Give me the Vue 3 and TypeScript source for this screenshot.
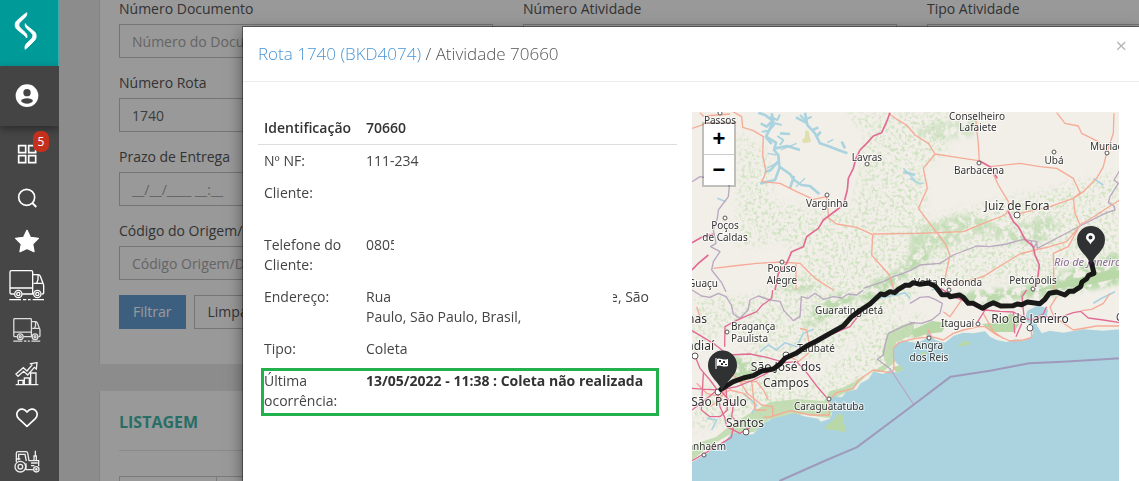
<script setup lang="ts">
import { ref } from 'vue'

interface MapLabel {
  text: string
  x: number
  y: number
  anchor?: 'start' | 'middle' | 'end'
  big?: boolean
}

interface Town {
  x: number
  y: number
  big?: boolean
}

const documento = ref('')
const rota = ref('1740')
const prazo = ref('')
const codigo = ref('')
const atividade = ref('')

const labels: MapLabel[] = [
  { text: 'Passos', x: 28, y: 12 },
  { text: 'Conselheiro', x: 285, y: 8 },
  { text: 'Lafaiete', x: 286, y: 19 },
  { text: 'Lavras', x: 175, y: 49 },
  { text: 'Varginha', x: 135, y: 95 },
  { text: 'Poços', x: 33, y: 117 },
  { text: 'de Caldas', x: 33, y: 129 },
  { text: 'Pouso', x: 90, y: 160 },
  { text: 'Alegre', x: 90, y: 172 },
  { text: 'Guaçu', x: 26, y: 175, anchor: 'end' },
  { text: 'Barbacena', x: 287, y: 62 },
  { text: 'Ubá', x: 362, y: 52 },
  { text: 'Muriaé', x: 398, y: 38, anchor: 'start' },
  { text: 'Juiz de Fora', x: 325, y: 98, big: true },
  { text: 'Petrópolis', x: 341, y: 172 },
  { text: 'Volta Redonda', x: 256, y: 174 },
  { text: 'nas', x: 15, y: 211, anchor: 'end', big: true },
  { text: 'Bragança', x: 39, y: 218, anchor: 'start' },
  { text: 'Paulista', x: 39, y: 230, anchor: 'start' },
  { text: 'ndiaí', x: 22, y: 238, anchor: 'end', big: true },
  { text: 'São Paulo', x: 27, y: 294, big: true },
  { text: 'Santos', x: 53, y: 315, big: true },
  { text: 'anhaém', x: 34, y: 338, anchor: 'end' },
  { text: 'Guaratinguetá', x: 157, y: 202 },
  { text: 'Taubaté', x: 124, y: 240 },
  { text: 'São José dos', x: 94, y: 259, big: true },
  { text: 'Campos', x: 94, y: 275, big: true },
  { text: 'Caraguatatuba', x: 137, y: 298 },
  { text: 'Itaguaí', x: 249, y: 215, anchor: 'start' },
  { text: 'Angra', x: 237, y: 237 },
  { text: 'dos Reis', x: 237, y: 249 },
  { text: 'Rio de Janeiro', x: 338, y: 211, big: true },
  { text: 'C', x: 424, y: 209, anchor: 'start' },
]

const towns: Town[] = [
  { x: 28, y: 1 }, { x: 175, y: 52 }, { x: 135, y: 83 }, { x: 33, y: 106 },
  { x: 90, y: 150 }, { x: 287, y: 51 }, { x: 362, y: 40 }, { x: 415, y: 41 },
  { x: 325, y: 103, big: true }, { x: 341, y: 177 }, { x: 257, y: 178 },
  { x: 35, y: 220 }, { x: 3, y: 244, big: true }, { x: 26, y: 280, big: true },
  { x: 54, y: 320, big: true }, { x: 12, y: 343 }, { x: 137, y: 287 },
  { x: 94, y: 243, big: true }, { x: 286, y: 212 }, { x: 338, y: 216, big: true },
  { x: 237, y: 226 },
]
</script>

<template>
  <div class="app">
    <aside class="sidebar">
      <a class="brand" href="#" aria-label="Início">
        <svg width="24" height="40" viewBox="44 33 72 120" fill="#fff" stroke="#fff" stroke-width="3" stroke-linejoin="round">
          <path d="M82 38C83 42 82 46 79 50L62 67C57 72 57 78 62 83L78 98C83 103 84 108 82 114C80 110 77 107 73 104L53 88C46 81 46 70 52 63L74 44C78 41 80 40 82 38Z" />
          <path d="M78 71C77 76 78 80 82 85L97 99C102 104 102 110 97 116L81 132C77 137 76 142 78 148C80 145 83 143 87 140L105 122C112 115 112 103 106 96L86 80C81 76 79 74 78 71Z" />
        </svg>
      </a>
      <button class="user" type="button" aria-label="Usuário">
        <svg width="24" height="24" viewBox="44 252 72 72">
          <circle cx="80" cy="287" r="34" fill="#fff" />
          <circle cx="80" cy="278" r="11" fill="#444" />
          <path d="M62 303C64 292 96 292 98 303C90 314 70 314 62 303Z" fill="#444" />
        </svg>
      </button>
      <nav class="menu">
        <a href="#" aria-label="Painel">
          <svg width="20" height="20" viewBox="49 70 60 60" fill="none" stroke="#fff" stroke-width="5">
            <path d="M54 75H75V96H54ZM84 75H105V96H84ZM54 105H75V126H54ZM84 105H105V126H84Z" />
          </svg>
          <span class="badge">5</span>
        </a>
        <a href="#" aria-label="Pesquisar">
          <svg width="20" height="20" viewBox="49 203 60 60" fill="none" stroke="#fff" stroke-width="5">
            <circle cx="78" cy="231" r="24" /><path d="M95 248L107 260" stroke-width="6" />
          </svg>
        </a>
        <a href="#" aria-label="Favoritos">
          <svg width="26" height="26" viewBox="42 326 78 78" fill="#fff" stroke="#fff" stroke-width="4" stroke-linejoin="round">
            <path d="M81 330L91 351L115 354L98 371L102 394L81 384L60 394L64 371L47 354L71 351Z" />
          </svg>
        </a>
        <a href="#" aria-label="Entregas">
          <svg width="36" height="32" viewBox="26 29 108 96" fill="none" stroke="#fff" stroke-width="4">
            <path d="M41 101H33Q29 101 29 97V35Q29 31 33 31H93Q97 31 97 35V101H66M30 83H96M98 43H114Q118 43 120 48L128 69Q130 72 130 77V98Q130 101 126 101H124M100 69H126M113 44V58L109 69M27 118H62M68 118H78M83 118H91M97 118H131" />
            <circle cx="54" cy="101" r="11" /><circle cx="54" cy="101" r="5" /><circle cx="111" cy="101" r="11" /><circle cx="111" cy="101" r="5" />
          </svg>
        </a>
        <a href="#" aria-label="Coletas">
          <svg width="28" height="25" viewBox="26 29 108 96" fill="none" stroke="#ddd" stroke-width="5">
            <path d="M41 101H33Q29 101 29 97V35Q29 31 33 31H93Q97 31 97 35V101H66M30 83H96M98 43H114Q118 43 120 48L128 69Q130 72 130 77V98Q130 101 126 101H124M100 69H126M113 44V58L109 69M27 118H62M68 118H78M83 118H91M97 118H131" />
            <circle cx="54" cy="101" r="11" /><circle cx="54" cy="101" r="4" /><circle cx="111" cy="101" r="11" /><circle cx="111" cy="101" r="4" />
          </svg>
        </a>
        <a href="#" aria-label="Indicadores">
          <svg width="24" height="24" viewBox="44 20 72 72" fill="none" stroke="#f4f4f4" stroke-width="4">
            <path d="M46 88H114M54 87V75H68V87M72 87V68H87V87M91 87V53H107V87" />
            <path d="M47 56L69 37L80 47L95 29L91 25L110 22L108 41L102 36L82 59L70 48L53 63Z" />
          </svg>
        </a>
        <a href="#" aria-label="Preferidos">
          <svg width="24" height="20" viewBox="44 158 72 60" fill="none" stroke="#fff" stroke-width="5" stroke-linejoin="round">
            <path d="M80 213L55 190C38 172 63 148 80 170C97 148 122 172 105 190Z" />
          </svg>
        </a>
        <a href="#" aria-label="Máquinas">
          <svg width="26" height="24" viewBox="41 284 78 72" fill="none" stroke="#ececec" stroke-width="4">
            <circle cx="60" cy="334" r="16" /><circle cx="60" cy="334" r="7" /><circle cx="108" cy="342" r="8" /><circle cx="108" cy="342" r="2" />
            <path d="M48 320V294Q48 289 53 289H77Q81 289 82 293L86 316H115V332M55 315V297H74L78 317M77 324V343H98M101 315V302H108V315M105 301V286M92 323H112M92 331H102M50 311H60" />
          </svg>
        </a>
      </nav>
    </aside>

    <main class="page">
      <section class="panel filters">
        <form class="grid" @submit.prevent>
          <div class="field">
            <label for="doc">Número Documento</label>
            <input id="doc" v-model="documento" type="text" placeholder="Número do Documento" />
          </div>
          <div class="field">
            <label for="ativ">Número Atividade</label>
            <input id="ativ" v-model="atividade" type="text" />
          </div>
          <div class="field">
            <label for="tipo">Tipo Atividade</label>
            <select id="tipo"><option value=""></option></select>
          </div>
          <div class="field first">
            <label for="rota">Número Rota</label>
            <input id="rota" v-model="rota" type="text" />
          </div>
          <div class="field first">
            <label for="prazo">Prazo de Entrega</label>
            <input id="prazo" v-model="prazo" type="text" placeholder="__/__/____ __:__" />
          </div>
          <div class="field first">
            <label for="codigo">Código do Origem/Destino</label>
            <input id="codigo" v-model="codigo" type="text" placeholder="Código Origem/Destino" />
          </div>
          <div class="actions first">
            <button class="btn primary" type="submit">Filtrar</button>
            <button class="btn" type="reset">Limpar</button>
          </div>
        </form>
      </section>
      <section class="panel listing">
        <h2>Listagem</h2>
        <table class="list">
          <thead><tr><th class="narrow"></th><th></th></tr></thead>
        </table>
      </section>
      <div class="backdrop"></div>
    </main>

    <div class="modal" role="dialog" aria-labelledby="modal-title">
      <header class="modal-head">
        <h1 id="modal-title"><a href="#">Rota 1740 (BKD4074)</a> / Atividade 70660</h1>
        <button class="close" type="button" aria-label="Fechar">×</button>
      </header>
      <div class="modal-body">
        <table class="details">
          <thead>
            <tr><th scope="col">Identificação</th><th scope="col">70660</th></tr>
          </thead>
          <tbody>
            <tr><th scope="row">Nº NF:</th><td>111-234</td></tr>
            <tr class="tall"><th scope="row">Cliente:</th><td></td></tr>
            <tr><th scope="row">Telefone do Cliente:</th><td><span class="cut">0805</span></td></tr>
            <tr><th scope="row">Endereço:</th><td>Rua<span class="mask"></span>e, São<br />Paulo, São Paulo, Brasil,</td></tr>
            <tr><th scope="row">Tipo:</th><td>Coleta</td></tr>
            <tr class="marked"><th scope="row">Última ocorrência:</th><td><strong>13/05/2022 - 11:38 : Coleta não realizada</strong></td></tr>
          </tbody>
        </table>

        <div class="map">
          <svg class="tiles" viewBox="0 0 427 369" preserveAspectRatio="xMinYMin slice" role="img" aria-label="Mapa da rota">
            <defs>
              <filter id="dense" x="-5%" y="-5%" width="110%" height="110%" color-interpolation-filters="sRGB">
                <feTurbulence type="fractalNoise" baseFrequency="0.12" numOctaves="4" seed="4" />
                <feColorMatrix values="0 0 0 0 0  0 0 0 0 0  0 0 0 0 0  0 0 0 6 -2.3" result="n" />
                <feGaussianBlur in="SourceGraphic" stdDeviation="2" />
                <feComposite in2="n" operator="in" />
              </filter>
              <filter id="sparse" x="-5%" y="-5%" width="110%" height="110%" color-interpolation-filters="sRGB">
                <feTurbulence type="fractalNoise" baseFrequency="0.3" numOctaves="4" seed="9" />
                <feColorMatrix values="0 0 0 0 0  0 0 0 0 0  0 0 0 0 0  0 0 0 4 -1.9" result="n" />
                <feGaussianBlur in="SourceGraphic" stdDeviation="4" />
                <feComposite in2="n" operator="in" />
              </filter>
            </defs>
            <rect width="427" height="369" fill="#f2efe9" />

            <g fill="#cfe3c1" filter="url(#sparse)">
              <path d="M46 20L75 40L80 90L160 100L175 20L225 0L235 90L215 150L130 170L90 130L46 135Z" />
              <path d="M150 0H260L255 40L225 60L200 40Z" />
              <path d="M224 110L260 100L427 60V150L340 170L230 170Z" />
              <path d="M0 185L60 185L130 150L220 130L230 180L130 250L60 240L40 215L0 240Z" />
              <path d="M0 295L60 230L110 280L190 210L230 200V240L120 290L0 320Z" />
            </g>
            <g fill="#bcdaae" filter="url(#dense)">
              <path d="M218 117L245 110L270 102L295 108L315 118L355 103L370 110L350 130L315 132L290 120L260 135L218 141Z" opacity=".7" />
              <path d="M165 185L185 167L208 157L222 138L235 133L238 145L205 172L180 190Z" />
              <path d="M330 175L370 160L400 148L427 140V173L400 178L355 185L320 188L290 195L262 183L285 178Z" />
              <path d="M85 173L105 165L125 170L118 180L95 180Z" opacity=".7" />
              <path d="M110 218L120 200L135 185L150 180L165 186L150 198L128 210Z" />
              <path d="M30 245L50 245L66 257L56 268L40 265L20 260Z" />
              <path d="M218 20L250 10L290 5L280 25L240 28Z" opacity=".5" />
            </g>
            <g fill="#b9d8a8">
              <path d="M0 333L24 325L40 312L55 303L78 290L105 287L132 289L138 279L150 276L176 263L194 251L190 240L196 221L210 213L222 210V222L204 230L203 250L192 259L176 262L160 278L140 287L139 306L128 305L112 302L90 307L78 307L62 320L40 321L18 334L0 348Z" opacity=".8" />
              <path d="M133 312L145 302L153 305L150 312L153 321L145 319L134 318Z" />
              <path d="M220 218L240 209L255 211L250 220L235 222L222 226ZM290 212L300 220L322 220L330 208L318 201L310 210ZM347 178L370 170L410 160L427 158V166L390 174Z" />
            </g>

            <g transform="translate(-2 178) scale(.33333)" stroke-linejoin="round">
              <path fill="#aad3df" d="M6 517L45 494L85 468L110 448L124 430L150 428L165 436L190 432L205 415L220 402L245 386L280 378L310 370L350 380L385 386L392 395L420 386L426 372L415 340L430 318L455 322L470 305L500 298L512 280L535 268L550 246L580 252L600 240L620 248L638 240L612 210L610 180L622 160L645 152L680 160L705 148L716 126L735 150L765 158L790 138L818 128L850 130L885 124L900 140L920 150L950 156L975 148L1000 152L1020 143L1030 130L1024 105L1004 90L1012 62L1040 48L1060 50L1074 60L1070 80L1048 84L1040 105L1055 130L1080 122L1120 128L1180 118L1240 122L1290 118V573H6Z" />
              <path fill="#b9d8a8" d="M405 410L430 390L445 372L462 376L458 400L468 412L464 428L440 420L412 420ZM800 170L820 153L845 156L835 166ZM690 185L715 188L700 198ZM607 232L632 226L640 240L620 248Z" />
              <path fill="none" stroke="#aad3df" stroke-width="5" d="M210 185L235 165L260 180L285 158L320 170L340 130L372 118M160 310L200 345L185 370M50 385L80 390L65 420M560 25L620 15L645 8L660 25M725 0L745 -8L765 15M1210 40L1235 25L1275 5" />

              <g fill="none" stroke="#b9a8c0" stroke-width="4">
                <path d="M6 0L35 18L60 22L85 10L108 20L124 45L130 72L150 85L174 60L180 30L205 18L240 30L270 34L282 62L310 92L330 80L334 20L355 25L375 10L400 28L430 20L455 24L475 12L500 15L520 0" />
                <path d="M675 97L650 105L620 118L595 130L585 165L580 195L562 208L600 236L670 342" />
                <path d="M660 40L690 22L715 20L735 28L757 40L750 70L725 90L695 100L660 98" />
              </g>
              <g fill="none" stroke="#f6ab96" stroke-width="4">
                <path d="M124 248L150 275L172 310L215 345L248 350V380L220 382M300 200L325 215L355 190L358 160L350 120L330 115M420 326L440 308L490 296L505 270L550 240L600 248L612 238L610 175L625 158L675 145L710 142L716 120L725 140L760 150L790 130L820 120L865 110L885 110L920 135L960 153L1000 150L1025 142L1024 110M250 378L300 362L360 375L418 375L416 326M150 275L200 275L220 300L235 330M820 22L780 80L760 65M1100 20L1080 52L1092 80L1150 120L1220 108L1290 108M880 70L910 125L940 145M1260 10L1240 40L1205 58L1175 62" />
                <path d="M20 280L50 310L90 320L120 300L160 310L185 330M60 350L90 330L110 290M185 275L195 360L230 360M6 100L30 80L20 50" />
              </g>
              <g fill="none" stroke="#e26a93" stroke-width="4">
                <path d="M6 122L40 142L70 160L115 195L180 192L230 202L285 218L320 215L350 248L380 288L410 323M104 170L105 110L132 95L165 80L200 65L216 46L245 25L248 0M15 198L30 235L60 270L82 300L90 350L105 385L110 410L150 430L184 410M6 295L50 298L90 300L140 290L190 270L230 250L290 205L370 155L480 110L530 45M40 250L34 360L60 380L90 380M130 412L124 442L70 475L6 512M82 300L45 330L6 360M90 300L130 345L125 380L145 400M120 245L108 290L112 360L90 380" />
                <path d="M752 -5L790 20L842 40L885 60L930 64L970 66L1002 82L1020 90L1070 80L1110 82L1150 68L1172 64L1195 84L1240 90L1290 98M860 100L885 60M970 66L974 130M1002 80L996 20L1010 0M1002 85L978 140M1020 90L1060 72L1070 50" />
              </g>
              <path fill="none" stroke="#9f9abb" stroke-width="6" d="M268 573L410 510L500 472L670 345L782 260L900 242L1018 220L1120 215L1290 205" />
            </g>

            <g transform="translate(-2 -12) scale(.33333)" stroke-linejoin="round">
              <path fill="#dfe0ad" d="M346 90L356 94L363 126L340 130L336 120L345 112Z" />
              <g fill="none" stroke="#aad3df" stroke-width="8">
                <path d="M205 38L225 45L248 62L230 80L212 70M245 40L250 65L228 110L258 128L252 150L265 165L268 200L300 222L312 240L335 255L360 258L388 282M228 112L245 132M256 145L292 138L330 150M268 180L240 212L224 215M268 205L255 240L210 250M300 265L312 228M270 100L300 102M345 38L352 75L375 100L390 130L420 140L445 150L472 160M352 70L318 52M368 90L385 82M455 125L465 145M640 215L675 225M380 110L392 95" />
                <path d="M215 95L238 92L255 70L275 75M240 50L262 60L270 44M262 108L280 120L270 135M330 45L345 60L365 50" stroke-width="6" />
                <path d="M318 260L345 235M232 160L260 165M258 190L230 205M412 128L430 118M272 150L320 130M640 205L675 240" stroke-width="4" />
                <path d="M660 235L690 252L700 248M1210 235L1240 255M82 295L108 305" stroke-width="5" />
              </g>
              <g fill="none" stroke="#b9a8c0" stroke-width="4">
                <path d="M6 245L30 230L60 236L90 215L118 258L115 290L85 330L82 355L70 390L78 430L62 440L90 455L70 485L65 510L95 548L108 575" />
                <path d="M520 565L580 545L610 530L640 520L660 512L690 495L750 490L790 465L860 438L900 440L950 432L1000 418L1040 425L1042 445L1090 420L1170 378L1250 338L1275 330L1272 318L1255 308L1260 290L1285 250L1272 240L1290 210M1022 420L1030 445L1042 425" />
              </g>
              <g fill="none" stroke="#f6ab96" stroke-width="4">
                <path d="M120 30L155 50L158 82L190 92L220 110L218 165L228 215L216 245L270 250L320 275L370 298L410 290L416 355L440 372L500 382L548 404L545 465L598 525L612 570M70 505L130 498L200 490L275 486L330 490L375 535L430 570M318 492L318 570M6 85L50 70L140 68M120 42L40 48L30 38" />
                <path d="M595 40L620 58L650 75L675 105L715 130L735 162L800 172L865 182L900 200L990 190L1050 200L1100 205L1150 235L1170 278L1150 295L1080 320L990 340M735 162L700 205L712 265L685 325L740 398L680 400L550 402M740 398L820 395L880 370L945 345L955 330M855 40L865 130L868 185M900 200L925 255L955 305L955 335M1100 38L1125 70L1165 78L1175 100L1225 125L1250 158L1240 200L1220 235L1180 275L1150 295L1155 340L1170 375L1135 440L1090 460L1092 570M1250 160L1270 100L1272 40M1170 375L1220 345L1260 318L1290 300M740 398L765 430L780 465L765 535L775 560M770 560L820 545L880 530L935 495L990 462L1035 450L1080 440L1130 425L1170 378" />
              </g>
              <g fill="none" stroke="#e26a93" stroke-width="5">
                <path d="M600 38L590 65L575 98L550 108L530 130L510 150L498 175L490 205L475 235L472 270L460 315L440 330L400 360L385 385L350 410L340 440L305 455L290 490L265 520L255 570" />
                <path d="M6 428L35 412L70 402M6 510L25 490L55 465" />
                <path d="M868 182L900 200L922 235M955 335L970 365L985 380L1005 418L1030 440L1035 465L1048 495L1042 545L1028 575" />
              </g>
            </g>

            <g class="towns">
              <circle v-for="(t, i) in towns" :key="i" :cx="t.x" :cy="t.y" :r="t.big ? 3 : 2" />
            </g>
            <text class="region" x="362" y="154">Rio de Janeiro</text>
            <text
              v-for="l in labels"
              :key="l.text"
              class="place"
              :class="{ big: l.big }"
              :x="l.x"
              :y="l.y"
              :text-anchor="l.anchor ?? 'middle'"
            >{{ l.text }}</text>

            <g transform="translate(-2 178) scale(.33333)">
              <path fill="none" stroke="#111" stroke-width="15" stroke-linejoin="round" stroke-linecap="round" opacity=".96" d="M93 298L110 287L130 275L160 264L190 257L215 243L250 237L270 222L285 205L318 190L350 168L380 153L420 130L460 108L485 80L512 60L540 42L572 12L585 14L600 5L614 8L625 -2L645 -14L658 -14L670 -22L690 -17L715 -21L735 -12L748 4L755 14L775 14L780 20L808 15L820 22L835 40L850 40L878 55L893 46L910 38L932 48L970 47L982 42L995 44L1012 36L1050 41L1065 28L1078 10L1100 6L1125 15L1137 4L1150 4L1172 -10L1176 -24L1190 -34L1196 -44L1212 -50L1204 -82" />
            </g>
            <g fill="#303133">
              <path d="M30 279C27 269 16 265 16 253A14 14 0 0 1 45 253C45 265 33 269 30 279Z" />
              <path d="M399 153C396 143 385 139 385 128A14 14 0 0 1 413 128C413 139 402 143 399 153Z" />
              <path fill="none" stroke="#fff" d="M24 246V257" />
              <path fill="#fff" d="M25 247C28 245 31 249 36 247V254C31 256 28 252 25 254Z" />
              <path fill="#303133" d="M27 248H29V250H27ZM31 249H33V251H31ZM29 251H31V253H29ZM33 252H35V253H33Z" />
              <path fill="#fff" fill-rule="evenodd" d="M398.500 132.500C397 129 394 128 394 125.500A4.500 4.500 0 0 1 403 125.500C403 128 400 129 398.500 132.500ZM398.500 123.500A2 2 0 1 0 398.500 127.500A2 2 0 1 0 398.500 123.500Z" />
            </g>
          </svg>
          <div class="zoom">
            <button type="button" aria-label="Aproximar">+</button>
            <button type="button" aria-label="Afastar">−</button>
          </div>
        </div>
      </div>
    </div>
  </div>
</template>

<style>
html,
body {
  overflow: hidden;
}
</style>

<style scoped>
* {
  box-sizing: border-box;
}
.app {
  display: flex;
  height: 100vh;
  overflow: hidden;
  font: 14px/20px "Open Sans", sans-serif;
  color: #444;
}
button,
input,
select {
  font: inherit;
}

/* sidebar */
.sidebar {
  display: flex;
  flex-direction: column;
  flex: 0 0 59px;
  background: #464646;
}
.brand,
.user,
.menu a {
  display: flex;
  align-items: center;
  justify-content: center;
  padding: 0 6px 0 0;
}
.brand {
  flex: 0 0 66px;
  padding-bottom: 4px;
  background: #009a99;
  border-right: 1px solid #3faaa9;
}
.user {
  flex: 0 0 60px;
  border: 0;
  background: #444;
  box-shadow: 0 3px 8px rgba(0, 0, 0, 0.4);
}
.menu {
  padding-top: 6px;
}
.menu a {
  position: relative;
  height: 44px;
}
.badge {
  position: absolute;
  top: -1px;
  left: 33px;
  width: 16px;
  border-radius: 7px;
  background: #c4301c;
  color: #fff;
  font-size: 12px;
  line-height: 21px;
  text-align: center;
}

/* page behind the dialog */
.page {
  position: relative;
  flex: 1;
  min-width: 0;
  padding-left: 40px;
  background: #e9e9e9;
  overflow: hidden;
}
.backdrop {
  position: absolute;
  inset: 0;
  background: rgba(0, 0, 0, 0.4);
}
.panel {
  padding: 0 19px;
  background: #fff;
  border-left: 1px solid #ddd;
}
.filters {
  margin-top: -1px;
  padding-bottom: 35px;
  margin-bottom: 27px;
}
.grid {
  display: grid;
  grid-template-columns: repeat(3, minmax(374px, 1fr));
  gap: 15px 30px;
}
.first {
  grid-column: 1;
}
.field label {
  display: block;
  margin-bottom: 5px;
  color: #555;
}
.field input,
.field select {
  display: block;
  width: 100%;
  height: 34px;
  padding: 0 12px;
  border: 1px solid #c4c4c4;
  border-radius: 0;
  background: #fff;
  color: #666;
  outline: 0;
}
.field input::placeholder {
  color: #a8a8a8;
  opacity: 1;
}
.actions {
  display: flex;
  gap: 8px;
}
.btn {
  height: 34px;
  padding: 0 13px;
  border: 1px solid #c4c4c4;
  background: #fff;
  color: #555;
}
.btn.primary {
  border-color: #659fd6;
  background: #659fd6;
  color: #fff;
}
.listing {
  padding-top: 20px;
  min-height: 120px;
}
.listing h2 {
  margin: 0 0 25px;
  padding-bottom: 17px;
  border-bottom: 1px solid #e4e4e4;
  color: #42b8aa;
  font-size: 16px;
  line-height: 22px;
  text-transform: uppercase;
}
.list {
  width: 100%;
  border-collapse: collapse;
}
.list th {
  height: 36px;
  border: 1px solid #ccc;
}
.list .narrow {
  width: 97px;
}

/* dialog */
.modal {
  position: fixed;
  top: 27px;
  right: 0;
  bottom: 0;
  left: 243px;
  display: flex;
  flex-direction: column;
  background: #fff;
  box-shadow: 0 0 0 1px rgba(0, 0, 0, 0.4), 0 5px 15px rgba(0, 0, 0, 0.5);
}
.modal-head {
  display: flex;
  align-items: flex-start;
  justify-content: space-between;
  padding: 14px 12px 15px 15px;
  border-bottom: 1px solid #ececec;
}
.modal-head h1 {
  margin: 0;
  color: #555;
  font-size: 17px;
  font-weight: 300;
  line-height: 25px;
}
.modal-head h1 a {
  color: #4b96d6;
  text-decoration: none;
}
.close {
  padding: 0;
  border: 0;
  background: none;
  color: #b5b5b5;
  font-size: 20px;
  line-height: 10px;
}
.modal-body {
  display: grid;
  flex: 1;
  grid-template-columns: 419fr 427fr;
  gap: 15px;
  min-height: 0;
  padding: 30px 20px 0 15px;
}
.details {
  align-self: start;
  width: 100%;
  border-collapse: collapse;
  table-layout: fixed;
}
.details th,
.details td {
  padding: 6px;
  text-align: left;
  vertical-align: top;
  font-weight: 400;
}
.details th:first-child {
  width: 102px;
}
.details thead th {
  font-weight: 600;
  color: #333;
  border-bottom: 1px solid #ddd;
}
.details td {
  white-space: nowrap;
}
.details strong {
  font-weight: 700;
  color: #333;
}
.details .tall {
  height: 52px;
}
.cut {
  display: block;
  width: 28px;
  overflow: hidden;
}
.mask {
  position: relative;
  display: inline-block;
  width: 222px;
  height: 14px;
  margin-right: -3px;
  background: #fff;
  vertical-align: middle;
}
.marked {
  position: relative;
}
.marked td::after {
  position: absolute;
  inset: 3px 18px 1px 3px;
  border: 3px solid #22b14c;
  content: "";
}

/* map */
.map {
  position: relative;
  min-height: 0;
  overflow: hidden;
}
.tiles {
  display: block;
  width: 100%;
  height: 100%;
}
.towns circle {
  fill: #fff;
  stroke: #555;
  stroke-width: 1;
}
.place {
  font-family: "Noto Sans", sans-serif;
  font-size: 10px;
  fill: #333;
  stroke: rgba(255, 255, 255, 0.7);
  stroke-width: 2px;
  paint-order: stroke;
}
.place.big {
  font-size: 12px;
}
.region {
  font-family: "Noto Sans", sans-serif;
  font-size: 11px;
  font-style: italic;
  fill: #8c6a96;
  stroke: rgba(255, 255, 255, 0.6);
  stroke-width: 2px;
  paint-order: stroke;
}
.zoom {
  position: absolute;
  top: 10px;
  left: 10px;
  display: flex;
  flex-direction: column;
  border: 2px solid rgba(0, 0, 0, 0.2);
  background: #fff;
  background-clip: padding-box;
}
.zoom button {
  width: 30px;
  height: 30px;
  padding: 0;
  border: 0;
  background: none;
  color: #000;
  font: bold 22px/30px "Liberation Sans", sans-serif;
}
.zoom button:first-child {
  height: 31px;
  border-bottom: 1px solid #ccc;
}
</style>
